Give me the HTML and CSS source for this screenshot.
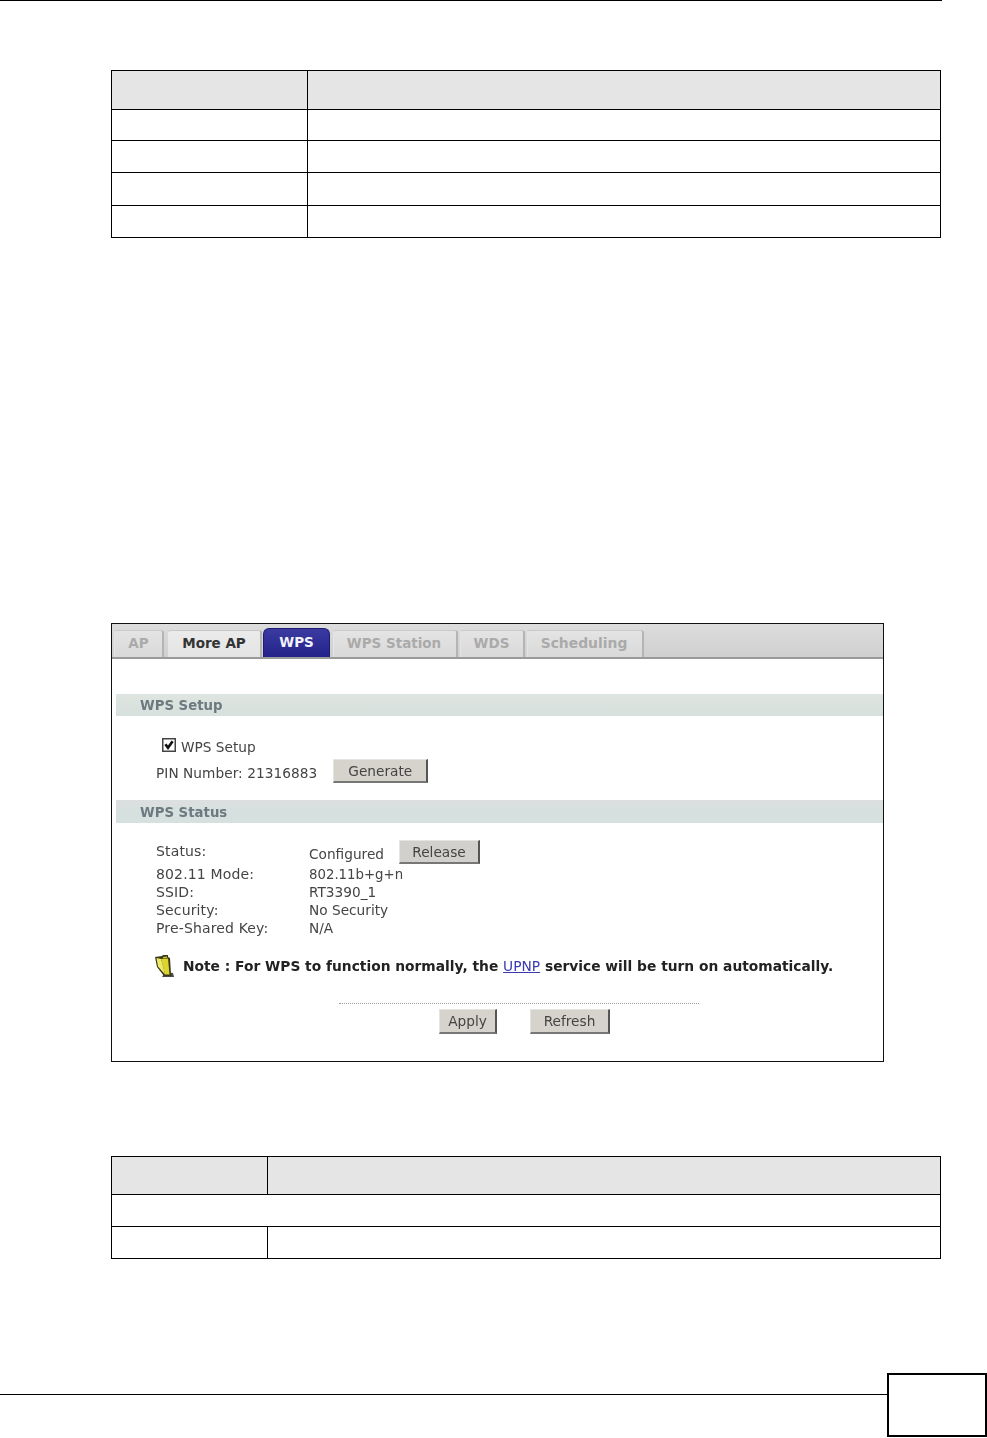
FILE: index.html
```html
<!DOCTYPE html>
<html lang="en">
<head>
<meta charset="utf-8">
<title>WPS</title>
<link rel="stylesheet" href="styles.css">
</head>
<body>
<div class="page">
  <div class="top-rule"></div>
  <table class="doc t1">
    <tr class="head"><td class="c1"></td><td></td></tr>
    <tr class="r31"><td></td><td></td></tr>
    <tr class="r32"><td></td><td></td></tr>
    <tr class="r33"><td></td><td></td></tr>
    <tr class="r32"><td></td><td></td></tr>
  </table>

  <div class="shot">
    <div class="inner">
      <div class="tabbar">
        <span class="tab off t-ap">AP</span>
        <span class="tab on t-more">More AP</span>
        <span class="tab act t-wps">WPS</span>
        <span class="tab off t-st">WPS Station</span>
        <span class="tab off t-wds">WDS</span>
        <span class="tab off t-sch">Scheduling</span>
      </div>
      <div class="content">
        <div class="bar bar1">WPS Setup</div>
        <div class="setup">
          <label class="chk"><svg class="box" width="14" height="14" viewBox="0 0 14 14"><rect x=".75" y=".75" width="12.5" height="12.5" fill="#fff" stroke="#444" stroke-width="1.5"/><path d="M3.4 6.2 L6 9.8 L10.6 3.2" fill="none" stroke="#111" stroke-width="2.6"/></svg>WPS Setup</label>
          <div class="pin"><span>PIN Number: 21316883</span><span class="btn b-gen">Generate</span></div>
        </div>
        <div class="bar bar2">WPS Status</div>
        <div class="status">
          <div class="row first"><span class="k">Status:</span><span class="v">Configured</span><span class="btn b-rel">Release</span></div>
          <div class="row"><span class="k">802.11 Mode:</span><span class="v small">802.11b+g+n</span></div>
          <div class="row"><span class="k">SSID:</span><span class="v">RT3390_1</span></div>
          <div class="row"><span class="k">Security:</span><span class="v">No Security</span></div>
          <div class="row"><span class="k">Pre-Shared Key:</span><span class="v">N/A</span></div>
        </div>
        <div class="note">
          <svg class="ico" width="22" height="24" viewBox="0 0 22 24">
            <path d="M9 23 L21 23 L20 19 L12 18 Z" fill="#4a4a4a"/>
            <path d="M2 3 L9 2 L10 1 L15 1 L15 3 L17 4 L18 20 L18 22 L11 22 L4 13 Z" fill="#3a3a18"/>
            <path d="M8 5 L15 4.5 L16.5 20.5 L12 20.5 L10 12 Z" fill="#dcd52e"/>
            <path d="M3.5 4 L8 5 L10 12 L12 20.5 L5 12.5 Z" fill="#efe96a"/>
            <path d="M10 3 L14 2.5 L14 4 L10 4.5 Z" fill="#c4be38"/>
          </svg>
          <span>Note : For WPS to function normally, the <a class="lnk">UPNP</a> service will be turn on automatically.</span>
        </div>
        <div class="dots"></div>
        <div class="actions"><span class="btn b-apply">Apply</span><span class="btn b-ref">Refresh</span></div>
      </div>
    </div>
  </div>

  <table class="doc t2">
    <tr class="head2"><td class="c1"></td><td></td></tr>
    <tr class="r32"><td colspan="2"></td></tr>
    <tr class="r32"><td class="c1"></td><td></td></tr>
  </table>

  <div class="footer">
    <div class="foot-rule"></div>
    <div class="pagebox"></div>
  </div>
</div>
</body>
</html>
```
FILE: styles.css
```css
* { box-sizing: border-box; }
html, body { margin: 0; padding: 0; background: #fff; }
.page { width: 987px; height: 1438px; position: relative; overflow: hidden; font-family: "DejaVu Sans", Verdana, sans-serif; }
.top-rule { width: 942px; height: 1px; background: #000; }

.doc { border-collapse: collapse; table-layout: fixed; width: 830px; margin-left: 111px; }
.doc td { border: 1px solid #000; padding: 0; }
.t1 { margin-top: 69px; }
.t1 .c1 { width: 196px; }
.t2 { margin-top: 94px; }
.t2 .c1 { width: 156px; }
.head td { height: 39px; background: #e5e5e5; }
.head2 td { height: 38px; background: #e5e5e5; }
.r31 td { height: 31px; }
.r32 td { height: 32px; }
.r33 td { height: 33px; }

.shot { margin: 385px 0 0 111px; width: 773px; height: 439px; border: 1px solid #111; background: #fff; }
.inner { filter: blur(0.45px); height: 100%; }
.tabbar { height: 35px; display: flex; align-items: flex-end; padding-left: 2px; background: linear-gradient(#dcdcdc, #d0d0d0); border-bottom: 2px solid #9a9a9a; }
.tab { display: flex; align-items: center; justify-content: center; height: 27px; padding-bottom: 2px; font-weight: 700; font-size: 13.5px; border-radius: 3px 3px 0 0; }
.off { color: #aaa; background: linear-gradient(#e4e4e4, #d9d9d9); border-top: 1px solid #c8c8c8; border-right: 2px solid #b4b4b4; border-left: 1px solid #e4e4e4; padding-right: 2px; }
.on { color: #333; background: linear-gradient(#ebebeb, #e4e4e4); border-top: 1px solid #c8c8c8; border-right: 2px solid #b4b4b4; }
.act { color: #f2f2fa; height: 29px; padding-bottom: 2px; background: linear-gradient(#3a3aa0, #23238a); border: 1px solid #1c1c70; border-bottom: 0; border-radius: 6px 6px 0 0; }
.t-ap { width: 50px; padding-right: 0; }
.t-more { width: 94px; margin-left: 4px; }
.t-wps { width: 67px; margin-left: 1px; }
.t-st { width: 125px; margin-left: 3px; }
.t-wds { width: 65px; margin-left: 2px; padding-right: 1px; }
.t-sch { width: 117px; margin-left: 2px; font-size: 13.9px; padding-right: 2px; }

.content { position: relative; height: 402px; color: #444; font-size: 13.7px; }
.bar { margin-left: 4px; display: flex; align-items: center; padding-left: 24px; font-weight: 700; font-size: 13.3px; color: #6c7a80; background: linear-gradient(#dfe5e1, #d6e0dc); }
.bar1 { margin-top: 35px; height: 22px; }
.bar2 { margin-top: 14px; height: 23px; padding-top: 1px; background: linear-gradient(#dcdfe0 30%, #d5e0df 30%); }

.setup { padding-top: 20px; }
.chk { display: flex; align-items: center; padding-left: 50px; height: 22px; color: #444; }
.box { margin-right: 5px; position: relative; top: -2px; }
.pin { display: flex; align-items: center; padding-left: 44px; margin-top: 2px; height: 26px; letter-spacing: .05px; }
.btn { display: flex; align-items: center; justify-content: center; color: #444; font-size: 13.7px; letter-spacing: 0; background: #d6d3cc; border-right: 2px solid #555; border-bottom: 2px solid #777; border-top: 1px solid #e4e4e0; border-left: 1px solid #e4e4e0; }
.b-gen { width: 95px; height: 24px; margin-left: 16px; margin-top: -4px; }

.status { padding-top: 17px; padding-left: 44px; }
.row { display: flex; align-items: center; height: 18px; }
.row.first { height: 24px; margin-bottom: 1px; }
.k { width: 153px; font-size: 14px; letter-spacing: .15px; }
.v.small { font-size: 13.3px; }
.row.first .k { position: relative; top: -1px; }
.row.first .v { position: relative; top: 2px; }
.b-rel { width: 81px; height: 24px; margin-left: 15px; background: #d2d0cc; }

.note { display: flex; align-items: center; padding-left: 41px; margin-top: 16px; height: 26px; font-weight: 700; color: #222; font-size: 13.8px; white-space: nowrap; }
.ico { margin-right: 8px; flex: none; }
.lnk { color: #3a3ab0; font-weight: 400; text-decoration: underline; }

.dots { margin: 24px 0 0 227px; width: 360px; border-top: 1px dotted #999; }
.actions { display: flex; padding-left: 327px; margin-top: 5px; }
.b-apply { width: 58px; height: 25px; }
.b-ref { width: 80px; height: 25px; margin-left: 33px; }

.footer { position: absolute; left: 0; top: 1373px; width: 987px; height: 64px; }
.foot-rule { position: absolute; left: 0; top: 21px; width: 888px; height: 1px; background: #000; }
.pagebox { position: absolute; left: 887px; top: 0; width: 100px; height: 64px; border: 2px solid #000; }
```
